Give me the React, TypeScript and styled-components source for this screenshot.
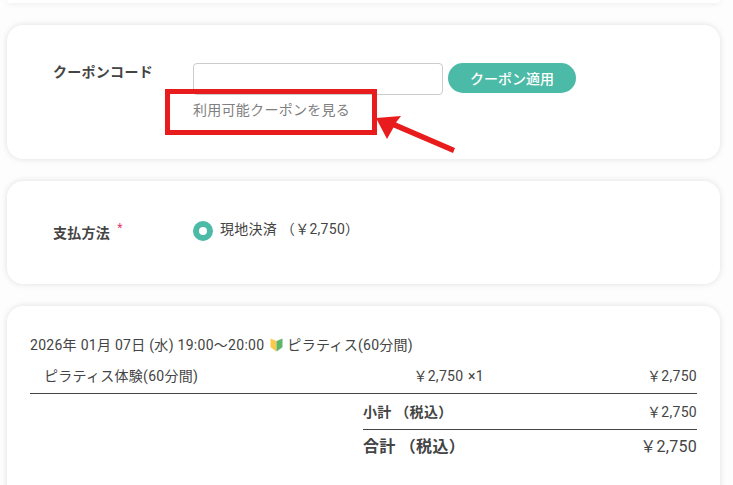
import styled, { createGlobalStyle } from "styled-components";

const GlobalStyle = createGlobalStyle`
  html, body {
    margin: 0;
    padding: 0;
    height: 100%;
    overflow: hidden;
    background-color: #fdfdfd;
  }
  * {
    box-sizing: border-box;
  }
`;

const Page = styled.div`
  position: relative;
  width: 733px;
  height: 485px;
  overflow: hidden;
  padding-left: 7px;
  font-family: Roboto, "Noto Sans CJK JP", sans-serif;
  font-size: 14px;
  letter-spacing: 0.02em;
  color: #444;
  display: flex;
  flex-direction: column;
  gap: 22px;
`;

const Card = styled.section<{ $height: number; $top?: boolean }>`
  flex: none;
  width: 713px;
  height: ${(props) => props.$height}px;
  background-color: #fff;
  border-radius: ${(props) => (props.$top ? "0 0 16px 16px" : "16px")};
  box-shadow: 0 0 6px rgba(0, 0, 0, 0.12);
`;

const FormCard = styled(Card)`
  display: grid;
  grid-template-columns: 140px 1fr;
  padding-left: 46px;
`;

const Label = styled.div<{ $top: number }>`
  padding-top: ${(props) => props.$top}px;
  font-weight: 700;
  font-size: 14px;
  line-height: 20px;
  color: #444;
`;

const Required = styled.sup`
  margin-left: 7px;
  color: #e0366a;
  font-size: 12px;
  font-weight: 400;
  line-height: 0;
`;

const CouponField = styled.div`
  padding-top: 38px;
`;

const CouponRow = styled.div`
  display: flex;
  align-items: flex-start;
  gap: 5px;
`;

const CouponInput = styled.input`
  width: 250px;
  height: 32px;
  border: 1px solid #ccc;
  border-radius: 4px;
  background: #fff;
`;

const ApplyButton = styled.button`
  width: 128px;
  height: 30px;
  border: none;
  border-radius: 15px;
  background-color: #4bbaa6;
  color: #fff;
  font-family: inherit;
  font-size: 14px;
  font-weight: 500;
  padding: 0;
`;

const CouponLink = styled.div`
  margin-top: 5px;
  color: #808080;
  font-size: 14px;
  line-height: 20px;
`;

const PaymentOption = styled.div`
  display: flex;
  align-items: flex-start;
  gap: 7px;
  padding-top: 38px;
  line-height: 20px;
  font-size: 14px;
`;

const Radio = styled.span`
  flex: none;
  width: 20px;
  height: 20px;
  margin-top: 2px;
  border-radius: 50%;
  border: 6px solid #4bbaa6;
  background-color: #fff;
`;

const OrderCard = styled(Card)`
  padding: 28px 23px 0 23px;
`;

const OrderTitle = styled.div`
  display: flex;
  align-items: center;
  height: 20px;
  white-space: pre;
  font-size: 14px;
`;

const Beginner = styled.svg`
  width: 13px;
  height: 15px;
  margin: 0 4px 0 6px;
  flex: none;
`;

const ItemRow = styled.div`
  display: grid;
  grid-template-columns: 352px 88px 1fr;
  align-items: center;
  height: 33px;
  margin-top: 7px;
  padding: 0 0 5px 14px;
  border-bottom: 1px solid #444;
`;

const Quantity = styled.span`
  white-space: nowrap;
  text-align: right;
  word-spacing: 1px;
`;

const Amount = styled.span`
  text-align: right;
  white-space: nowrap;
`;

const TotalRow = styled.div<{ $grand?: boolean }>`
  display: flex;
  justify-content: space-between;
  align-items: center;
  margin-left: 333px;
  padding-bottom: ${(props) => (props.$grand ? "5px" : "2px")};
  height: ${(props) => (props.$grand ? "34px" : "36px")};
  border-bottom: ${(props) => (props.$grand ? "none" : "1px solid #444")};
  font-size: ${(props) => (props.$grand ? "16px" : "14px")};
`;

const TotalLabel = styled.span`
  font-weight: 700;
`;

const Callout = styled.div`
  position: absolute;
  left: 165px;
  top: 89px;
  width: 212px;
  height: 46px;
  border: 5px solid #e81c1c;
`;

const Arrow = styled.svg`
  position: absolute;
  left: 370px;
  top: 110px;
  width: 90px;
  height: 48px;
`;

function App() {
  return (
    <Page>
      <GlobalStyle />
      <Card $top $height={3} />

      <FormCard $height={134}>
        <Label $top={37}>クーポンコード</Label>
        <CouponField>
          <CouponRow>
            <CouponInput />
            <ApplyButton>クーポン適用</ApplyButton>
          </CouponRow>
          <CouponLink>利用可能クーポンを見る</CouponLink>
        </CouponField>
      </FormCard>

      <FormCard $height={103}>
        <Label $top={42}>
          支払方法<Required>*</Required>
        </Label>
        <PaymentOption>
          <Radio />
          <span>現地決済 （￥2,750）</span>
        </PaymentOption>
      </FormCard>

      <OrderCard $height={200}>
        <OrderTitle>
          2026年 01月 07日 (水) 19:00～20:00
          <Beginner viewBox="0 0 13 15">
            <path d="M0.5 1.5 L6.5 4 V14.5 L1.5 11 Q0.5 10.4 0.5 9.5 Z" fill="#f7c94f" />
            <path d="M12.5 1.5 L6.5 4 V14.5 L11.5 11 Q12.5 10.4 12.5 9.5 Z" fill="#5fb56a" />
          </Beginner>
          ピラティス(60分間)
        </OrderTitle>
        <ItemRow>
          <span>ピラティス体験(60分間)</span>
          <Quantity>￥2,750 ×1</Quantity>
          <Amount>￥2,750</Amount>
        </ItemRow>
        <TotalRow>
          <TotalLabel>小計 （税込）</TotalLabel>
          <Amount>￥2,750</Amount>
        </TotalRow>
        <TotalRow $grand>
          <TotalLabel>合計 （税込）</TotalLabel>
          <Amount>￥2,750</Amount>
        </TotalRow>
      </OrderCard>

      <Callout />
      <Arrow viewBox="0 0 90 48">
        <path d="M6 8 L31 6 L26 12.5 L85 38 L83 43 L23.5 17.5 L17 29 Z" fill="#e81c1c" />
      </Arrow>
    </Page>
  );
}

export default App;
